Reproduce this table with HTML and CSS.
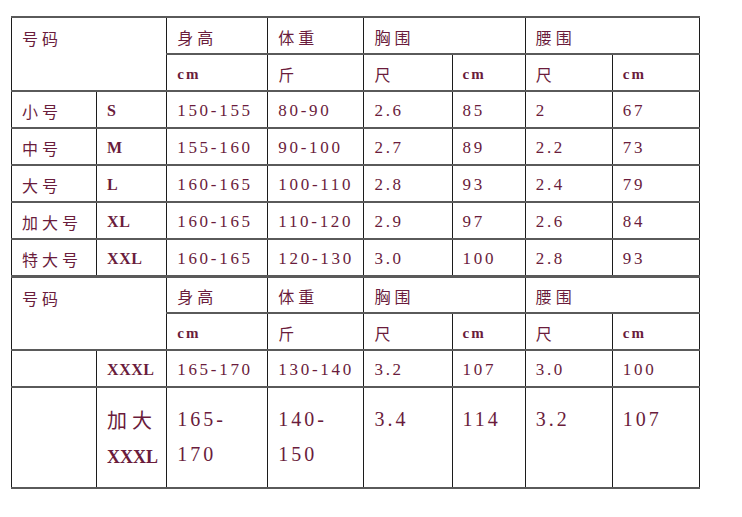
FILE: index.html
```html
<!DOCTYPE html>
<html lang="zh-CN">
<head>
<meta charset="utf-8">
<title>尺码表</title>
<link rel="stylesheet" href="styles.css">
</head>
<body>
<div class="sheet">
<table class="sizes">
  <colgroup>
    <col class="c1"><col class="c2"><col class="c3"><col class="c4">
    <col class="c5"><col class="c6"><col class="c7"><col class="c8">
  </colgroup>
  <tbody>
    <tr>
      <td class="zh head" colspan="2" rowspan="2">号码</td>
      <td class="zh">身高</td>
      <td class="zh">体重</td>
      <td class="zh" colspan="2">胸围</td>
      <td class="zh" colspan="2">腰围</td>
    </tr>
    <tr>
      <td class="unit">cm</td>
      <td class="zh">斤</td>
      <td class="zh">尺</td>
      <td class="unit">cm</td>
      <td class="zh">尺</td>
      <td class="unit">cm</td>
    </tr>
    <tr>
      <td class="zh">小号</td><td class="lt">S</td>
      <td class="num">150-155</td><td class="num">80-90</td>
      <td class="num">2.6</td><td class="num">85</td>
      <td class="num">2</td><td class="num">67</td>
    </tr>
    <tr>
      <td class="zh">中号</td><td class="lt">M</td>
      <td class="num">155-160</td><td class="num">90-100</td>
      <td class="num">2.7</td><td class="num">89</td>
      <td class="num">2.2</td><td class="num">73</td>
    </tr>
    <tr>
      <td class="zh">大号</td><td class="lt">L</td>
      <td class="num">160-165</td><td class="num">100-110</td>
      <td class="num">2.8</td><td class="num">93</td>
      <td class="num">2.4</td><td class="num">79</td>
    </tr>
    <tr>
      <td class="zh">加大号</td><td class="lt">XL</td>
      <td class="num">160-165</td><td class="num">110-120</td>
      <td class="num">2.9</td><td class="num">97</td>
      <td class="num">2.6</td><td class="num">84</td>
    </tr>
    <tr>
      <td class="zh">特大号</td><td class="lt">XXL</td>
      <td class="num">160-165</td><td class="num">120-130</td>
      <td class="num">3.0</td><td class="num">100</td>
      <td class="num">2.8</td><td class="num">93</td>
    </tr>
    <tr class="split">
      <td class="zh head" colspan="2" rowspan="2">号码</td>
      <td class="zh">身高</td>
      <td class="zh">体重</td>
      <td class="zh" colspan="2">胸围</td>
      <td class="zh" colspan="2">腰围</td>
    </tr>
    <tr>
      <td class="unit">cm</td>
      <td class="zh">斤</td>
      <td class="zh">尺</td>
      <td class="unit">cm</td>
      <td class="zh">尺</td>
      <td class="unit">cm</td>
    </tr>
    <tr>
      <td></td><td class="lt">XXXL</td>
      <td class="num">165-170</td><td class="num">130-140</td>
      <td class="num">3.2</td><td class="num">107</td>
      <td class="num">3.0</td><td class="num">100</td>
    </tr>
    <tr class="big">
      <td></td><td class="lt"><span class="zh">加大</span><br>XXXL</td>
      <td class="num">165-<br>170</td><td class="num">140-<br>150</td>
      <td class="num">3.4</td><td class="num">114</td>
      <td class="num">3.2</td><td class="num">107</td>
    </tr>
  </tbody>
</table>
</div>
</body>
</html>
```

FILE: styles.css
```css
html, body {
  margin: 0;
  padding: 0;
  background: #ffffff;
}

.sheet {
  padding: 16px 0 0 11px;
}

.sizes {
  border-collapse: collapse;
  table-layout: fixed;
  width: 689px;
  color: #6a1c3c;
  font-family: "Liberation Serif", "Noto Sans CJK SC", serif;
}

.c1 { width: 85px; }
.c2 { width: 70px; }
.c3 { width: 101px; }
.c4 { width: 96px; }
.c5 { width: 88px; }
.c6 { width: 73px; }
.c7 { width: 87px; }
.c8 { width: 87px; }

.sizes tr {
  height: 37px;
}

.sizes td {
  border-top: 2px solid #5a5a5a;
  border-bottom: 2px solid #5a5a5a;
  border-left: 1.5px solid #1c1c1c;
  border-right: 1.5px solid #1c1c1c;
  padding: 3px 6px 0 10px;
  vertical-align: middle;
  text-align: left;
  white-space: nowrap;
  line-height: 24px;
  font-size: 17px;
}

.sizes td.head {
  vertical-align: top;
  padding-top: 8px;
}

.zh {
  font-family: "Noto Sans CJK SC", serif;
  font-size: 16px;
  letter-spacing: 4px;
  font-weight: 400;
}

.sizes td.zh {
  font-size: 16px;
}

.unit {
  letter-spacing: 2px;
}

.sizes td.unit {
  font-size: 15px;
  font-weight: 700;
}

.num {
  letter-spacing: 2.7px;
}

.sizes td.lt {
  font-size: 16px;
  font-weight: 700;
  letter-spacing: 0.5px;
}

.sizes tr.split td {
  border-top: 3px solid #5a5a5a;
}

.sizes tr.big {
  height: 101px;
}

.sizes tr.big td {
  vertical-align: top;
  padding-top: 14px;
  line-height: 35px;
  font-size: 20px;
  letter-spacing: 3px;
}

.sizes tr.big td.lt {
  font-size: 18px;
  letter-spacing: 0;
}

.sizes tr.big td.lt .zh {
  font-size: 20px;
  letter-spacing: 5px;
}
```
